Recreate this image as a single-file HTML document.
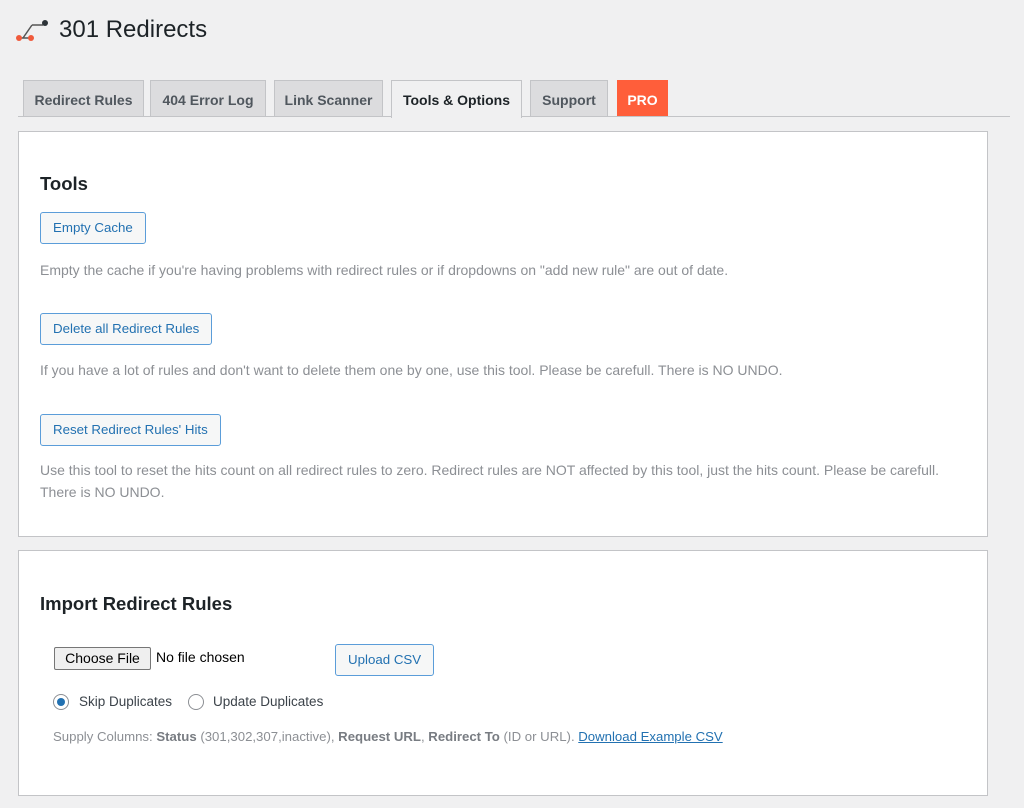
<!DOCTYPE html>
<html><head><style>
body{margin:0;background:#f0f0f1;font-family:"Liberation Sans",sans-serif;color:#1d2327;width:1024px;height:808px;overflow:hidden;position:relative}
.a{position:absolute}
h1{position:absolute;left:59px;top:16px;margin:0;font-size:24px;font-weight:400;color:#1d2327}
.tab{position:absolute;top:80px;height:36px;line-height:38px;background:#dcdcde;border:1px solid #c3c4c7;border-bottom:none;font-size:14px;font-weight:600;color:#50575e;text-align:center;box-sizing:border-box}
.line{position:absolute;left:18px;top:116px;width:992px;height:1px;background:#c3c4c7}
.panel{position:absolute;left:18px;width:970px;background:#fff;border:1px solid #c3c4c7;box-sizing:border-box}
h2{position:absolute;margin:0;font-size:18.5px;font-weight:600;color:#1d2327;left:40px}
.btn{position:absolute;left:40px;height:32px;line-height:30px;padding:0 12px;border:1px solid #5b9dd9;border-radius:3px;background:#f6f7f7;color:#2271b1;font-size:13.3px;box-sizing:border-box}
.p{position:absolute;left:40px;font-size:14px;color:#8c8f94;line-height:22px;width:930px}
</style></head><body>
<svg class="a" style="left:15px;top:18px" width="36" height="24" viewBox="0 0 36 24"><line x1="4" y1="20" x2="15" y2="20" stroke="#555" stroke-width="1.5"/><line x1="8" y1="20" x2="17" y2="7" stroke="#555" stroke-width="1.5"/><line x1="17" y1="7" x2="28" y2="7" stroke="#555" stroke-width="1.5"/><circle cx="4" cy="20" r="3" fill="#f05a3c"/><circle cx="16" cy="20" r="3" fill="#f05a3c"/><circle cx="30" cy="5" r="3" fill="#2c3338"/></svg>
<h1>301 Redirects</h1>
<div class="tab" style="left:23px;width:121px">Redirect Rules</div>
<div class="tab" style="left:150px;width:116px">404 Error Log</div>
<div class="tab" style="left:274px;width:109px">Link Scanner</div>
<div class="line"></div>
<div class="tab" style="left:391px;width:131px;height:38px;background:#f0f0f1;color:#1d2327;z-index:2">Tools &amp; Options</div>
<div class="tab" style="left:530px;width:78px">Support</div>
<div class="tab" style="left:617px;width:51px;background:#ff5e3a;border-color:#ff5e3a;color:#fff">PRO</div>

<div class="panel" style="top:131px;height:406px"></div>
<h2 style="top:173px">Tools</h2>
<div class="btn" style="top:212px">Empty Cache</div>
<div class="p" style="top:259px">Empty the cache if you're having problems with redirect rules or if dropdowns on "add new rule" are out of date.</div>
<div class="btn" style="top:313px">Delete all Redirect Rules</div>
<div class="p" style="top:359px">If you have a lot of rules and don't want to delete them one by one, use this tool. Please be carefull. There is NO UNDO.</div>
<div class="btn" style="top:414px">Reset Redirect Rules' Hits</div>
<div class="p" style="top:459px">Use this tool to reset the hits count on all redirect rules to zero. Redirect rules are NOT affected by this tool, just the hits count. Please be carefull.<br>There is NO UNDO.</div>

<div class="panel" style="top:550px;height:246px"></div>
<h2 style="top:593px">Import Redirect Rules</h2>
<div class="a" style="left:54px;top:647px;width:97px;height:23px;background:#efefef;border:1px solid #767676;border-radius:2px;box-sizing:border-box;font-size:14px;text-align:center;line-height:21px;color:#000">Choose File</div>
<div class="a" style="left:156px;top:649px;font-size:14px;color:#000">No file chosen</div>
<div class="btn" style="left:335px;top:644px;padding:0 12px">Upload CSV</div>
<div class="a" style="left:53px;top:694px;width:16px;height:16px;border:1px solid #8c8f94;border-radius:50%;box-sizing:border-box"><div style="margin:3px;width:8px;height:8px;border-radius:50%;background:#2271b1"></div></div>
<div class="a" style="left:79px;top:694px;font-size:13.5px;color:#3c434a">Skip Duplicates</div>
<div class="a" style="left:188px;top:694px;width:16px;height:16px;border:1px solid #8c8f94;border-radius:50%;box-sizing:border-box"></div>
<div class="a" style="left:213px;top:694px;font-size:13.5px;color:#3c434a">Update Duplicates</div>
<div class="p" style="left:53px;top:726px;font-size:13.2px">Supply Columns: <b style="color:#787c82">Status</b> (301,302,307,inactive), <b style="color:#787c82">Request URL</b>, <b style="color:#787c82">Redirect To</b> (ID or URL). <span style="color:#2271b1;text-decoration:underline">Download Example CSV</span></div>
</body></html>
